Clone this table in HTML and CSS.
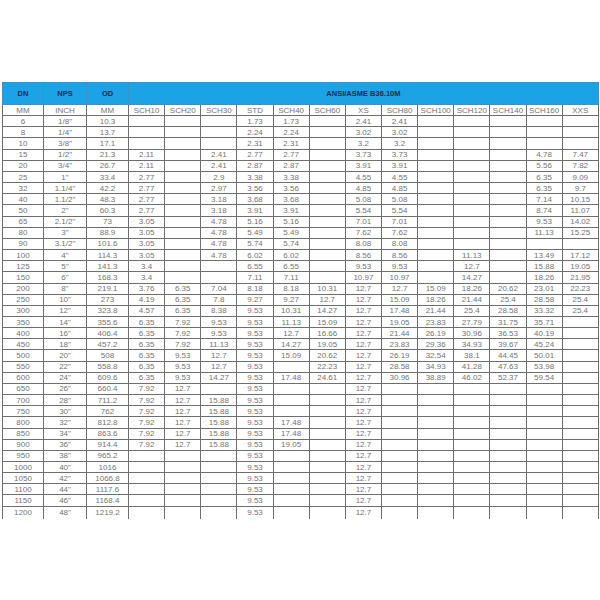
FILE: index.html
```html
<!DOCTYPE html>
<html>
<head>
<meta charset="utf-8">
<link rel="stylesheet" href="styles.css">
</head>
<body>
<table class="pipe">
<colgroup>
<col class="c-dn"><col class="c-nps"><col class="c-od">
<col class="c-s"><col class="c-s"><col class="c-s"><col class="c-s"><col class="c-s"><col class="c-s"><col class="c-s"><col class="c-s"><col class="c-s"><col class="c-s"><col class="c-s"><col class="c-s"><col class="c-s">
</colgroup>
<thead>
<tr class="head"><th>DN</th><th>NPS</th><th>OD</th><th colspan="13">ANSI/ASME B36.10M</th></tr>
</thead>
<tbody>
<tr><td>MM</td><td>INCH</td><td>MM</td><td>SCH10</td><td>SCH20</td><td>SCH30</td><td>STD</td><td>SCH40</td><td>SCH60</td><td>XS</td><td>SCH80</td><td>SCH100</td><td>SCH120</td><td>SCH140</td><td>SCH160</td><td>XXS</td></tr>
<tr><td>6</td><td>1/8"</td><td>10.3</td><td></td><td></td><td></td><td>1.73</td><td>1.73</td><td></td><td>2.41</td><td>2.41</td><td></td><td></td><td></td><td></td><td></td></tr>
<tr><td>8</td><td>1/4"</td><td>13.7</td><td></td><td></td><td></td><td>2.24</td><td>2.24</td><td></td><td>3.02</td><td>3.02</td><td></td><td></td><td></td><td></td><td></td></tr>
<tr><td>10</td><td>3/8"</td><td>17.1</td><td></td><td></td><td></td><td>2.31</td><td>2.31</td><td></td><td>3.2</td><td>3.2</td><td></td><td></td><td></td><td></td><td></td></tr>
<tr><td>15</td><td>1/2"</td><td>21.3</td><td>2.11</td><td></td><td>2.41</td><td>2.77</td><td>2.77</td><td></td><td>3.73</td><td>3.73</td><td></td><td></td><td></td><td>4.78</td><td>7.47</td></tr>
<tr><td>20</td><td>3/4"</td><td>26.7</td><td>2.11</td><td></td><td>2.41</td><td>2.87</td><td>2.87</td><td></td><td>3.91</td><td>3.91</td><td></td><td></td><td></td><td>5.56</td><td>7.82</td></tr>
<tr><td>25</td><td>1"</td><td>33.4</td><td>2.77</td><td></td><td>2.9</td><td>3.38</td><td>3.38</td><td></td><td>4.55</td><td>4.55</td><td></td><td></td><td></td><td>6.35</td><td>9.09</td></tr>
<tr><td>32</td><td>1.1/4"</td><td>42.2</td><td>2.77</td><td></td><td>2.97</td><td>3.56</td><td>3.56</td><td></td><td>4.85</td><td>4.85</td><td></td><td></td><td></td><td>6.35</td><td>9.7</td></tr>
<tr><td>40</td><td>1.1/2"</td><td>48.3</td><td>2.77</td><td></td><td>3.18</td><td>3.68</td><td>3.68</td><td></td><td>5.08</td><td>5.08</td><td></td><td></td><td></td><td>7.14</td><td>10.15</td></tr>
<tr><td>50</td><td>2"</td><td>60.3</td><td>2.77</td><td></td><td>3.18</td><td>3.91</td><td>3.91</td><td></td><td>5.54</td><td>5.54</td><td></td><td></td><td></td><td>8.74</td><td>11.07</td></tr>
<tr><td>65</td><td>2.1/2"</td><td>73</td><td>3.05</td><td></td><td>4.78</td><td>5.16</td><td>5.16</td><td></td><td>7.01</td><td>7.01</td><td></td><td></td><td></td><td>9.53</td><td>14.02</td></tr>
<tr><td>80</td><td>3"</td><td>88.9</td><td>3.05</td><td></td><td>4.78</td><td>5.49</td><td>5.49</td><td></td><td>7.62</td><td>7.62</td><td></td><td></td><td></td><td>11.13</td><td>15.25</td></tr>
<tr><td>90</td><td>3.1/2"</td><td>101.6</td><td>3.05</td><td></td><td>4.78</td><td>5.74</td><td>5.74</td><td></td><td>8.08</td><td>8.08</td><td></td><td></td><td></td><td></td><td></td></tr>
<tr><td>100</td><td>4"</td><td>114.3</td><td>3.05</td><td></td><td>4.78</td><td>6.02</td><td>6.02</td><td></td><td>8.56</td><td>8.56</td><td></td><td>11.13</td><td></td><td>13.49</td><td>17.12</td></tr>
<tr><td>125</td><td>5"</td><td>141.3</td><td>3.4</td><td></td><td></td><td>6.55</td><td>6.55</td><td></td><td>9.53</td><td>9.53</td><td></td><td>12.7</td><td></td><td>15.88</td><td>19.05</td></tr>
<tr><td>150</td><td>6"</td><td>168.3</td><td>3.4</td><td></td><td></td><td>7.11</td><td>7.11</td><td></td><td>10.97</td><td>10.97</td><td></td><td>14.27</td><td></td><td>18.26</td><td>21.95</td></tr>
<tr><td>200</td><td>8"</td><td>219.1</td><td>3.76</td><td>6.35</td><td>7.04</td><td>8.18</td><td>8.18</td><td>10.31</td><td>12.7</td><td>12.7</td><td>15.09</td><td>18.26</td><td>20.62</td><td>23.01</td><td>22.23</td></tr>
<tr><td>250</td><td>10"</td><td>273</td><td>4.19</td><td>6.35</td><td>7.8</td><td>9.27</td><td>9.27</td><td>12.7</td><td>12.7</td><td>15.09</td><td>18.26</td><td>21.44</td><td>25.4</td><td>28.58</td><td>25.4</td></tr>
<tr><td>300</td><td>12"</td><td>323.8</td><td>4.57</td><td>6.35</td><td>8.38</td><td>9.53</td><td>10.31</td><td>14.27</td><td>12.7</td><td>17.48</td><td>21.44</td><td>25.4</td><td>28.58</td><td>33.32</td><td>25.4</td></tr>
<tr><td>350</td><td>14"</td><td>355.6</td><td>6.35</td><td>7.92</td><td>9.53</td><td>9.53</td><td>11.13</td><td>15.09</td><td>12.7</td><td>19.05</td><td>23.83</td><td>27.79</td><td>31.75</td><td>35.71</td><td></td></tr>
<tr><td>400</td><td>16"</td><td>406.4</td><td>6.35</td><td>7.92</td><td>9.53</td><td>9.53</td><td>12.7</td><td>16.66</td><td>12.7</td><td>21.44</td><td>26.19</td><td>30.96</td><td>36.53</td><td>40.19</td><td></td></tr>
<tr><td>450</td><td>18"</td><td>457.2</td><td>6.35</td><td>7.92</td><td>11.13</td><td>9.53</td><td>14.27</td><td>19.05</td><td>12.7</td><td>23.83</td><td>29.36</td><td>34.93</td><td>39.67</td><td>45.24</td><td></td></tr>
<tr><td>500</td><td>20"</td><td>508</td><td>6.35</td><td>9.53</td><td>12.7</td><td>9.53</td><td>15.09</td><td>20.62</td><td>12.7</td><td>26.19</td><td>32.54</td><td>38.1</td><td>44.45</td><td>50.01</td><td></td></tr>
<tr><td>550</td><td>22"</td><td>558.8</td><td>6.35</td><td>9.53</td><td>12.7</td><td>9.53</td><td></td><td>22.23</td><td>12.7</td><td>28.58</td><td>34.93</td><td>41.28</td><td>47.63</td><td>53.98</td><td></td></tr>
<tr><td>600</td><td>24"</td><td>609.6</td><td>6.35</td><td>9.53</td><td>14.27</td><td>9.53</td><td>17.48</td><td>24.61</td><td>12.7</td><td>30.96</td><td>38.89</td><td>46.02</td><td>52.37</td><td>59.54</td><td></td></tr>
<tr><td>650</td><td>26"</td><td>660.4</td><td>7.92</td><td>12.7</td><td></td><td>9.53</td><td></td><td></td><td>12.7</td><td></td><td></td><td></td><td></td><td></td><td></td></tr>
<tr><td>700</td><td>28"</td><td>711.2</td><td>7.92</td><td>12.7</td><td>15.88</td><td>9.53</td><td></td><td></td><td>12.7</td><td></td><td></td><td></td><td></td><td></td><td></td></tr>
<tr><td>750</td><td>30"</td><td>762</td><td>7.92</td><td>12.7</td><td>15.88</td><td>9.53</td><td></td><td></td><td>12.7</td><td></td><td></td><td></td><td></td><td></td><td></td></tr>
<tr><td>800</td><td>32"</td><td>812.8</td><td>7.92</td><td>12.7</td><td>15.88</td><td>9.53</td><td>17.48</td><td></td><td>12.7</td><td></td><td></td><td></td><td></td><td></td><td></td></tr>
<tr><td>850</td><td>34"</td><td>863.6</td><td>7.92</td><td>12.7</td><td>15.88</td><td>9.53</td><td>17.48</td><td></td><td>12.7</td><td></td><td></td><td></td><td></td><td></td><td></td></tr>
<tr><td>900</td><td>36"</td><td>914.4</td><td>7.92</td><td>12.7</td><td>15.88</td><td>9.53</td><td>19.05</td><td></td><td>12.7</td><td></td><td></td><td></td><td></td><td></td><td></td></tr>
<tr><td>950</td><td>38"</td><td>965.2</td><td></td><td></td><td></td><td>9.53</td><td></td><td></td><td>12.7</td><td></td><td></td><td></td><td></td><td></td><td></td></tr>
<tr><td>1000</td><td>40"</td><td>1016</td><td></td><td></td><td></td><td>9.53</td><td></td><td></td><td>12.7</td><td></td><td></td><td></td><td></td><td></td><td></td></tr>
<tr><td>1050</td><td>42"</td><td>1066.8</td><td></td><td></td><td></td><td>9.53</td><td></td><td></td><td>12.7</td><td></td><td></td><td></td><td></td><td></td><td></td></tr>
<tr><td>1100</td><td>44"</td><td>1117.6</td><td></td><td></td><td></td><td>9.53</td><td></td><td></td><td>12.7</td><td></td><td></td><td></td><td></td><td></td><td></td></tr>
<tr><td>1150</td><td>46"</td><td>1168.4</td><td></td><td></td><td></td><td>9.53</td><td></td><td></td><td>12.7</td><td></td><td></td><td></td><td></td><td></td><td></td></tr>
<tr class="last"><td>1200</td><td>48"</td><td>1219.2</td><td></td><td></td><td></td><td>9.53</td><td></td><td></td><td>12.7</td><td></td><td></td><td></td><td></td><td></td><td></td></tr>
</tbody>
</table>
</body>
</html>
```

FILE: styles.css
```css
html, body {
  margin: 0;
  padding: 0;
  background: #ffffff;
}
body {
  padding: 82px 2px 0 2px;
  font-family: "Liberation Sans", Arial, sans-serif;
}
.pipe {
  width: 596px;
  table-layout: fixed;
  border-collapse: collapse;
  font-size: 8px;
  color: #747474;
}
.c-dn { width: 41px; }
.c-nps { width: 43px; }
.c-od { width: 42px; }
.c-s { width: 36.15px; }
.pipe th {
  height: 21px;
  padding: 0;
  background: #1ca3e6;
  color: #1b2d55;
  font-weight: bold;
  font-size: 7.5px;
  line-height: 9px;
  text-align: center;
  border: 1px solid #3f8fc4;
}
.pipe td {
  height: 10.17px;
  padding: 0;
  line-height: 9px;
  text-align: center;
  border: 1px solid #6e6e6e;
  white-space: nowrap;
  overflow: hidden;
}
.pipe tr.last td {
  border-bottom: none;
  height: 12px;
}
```
